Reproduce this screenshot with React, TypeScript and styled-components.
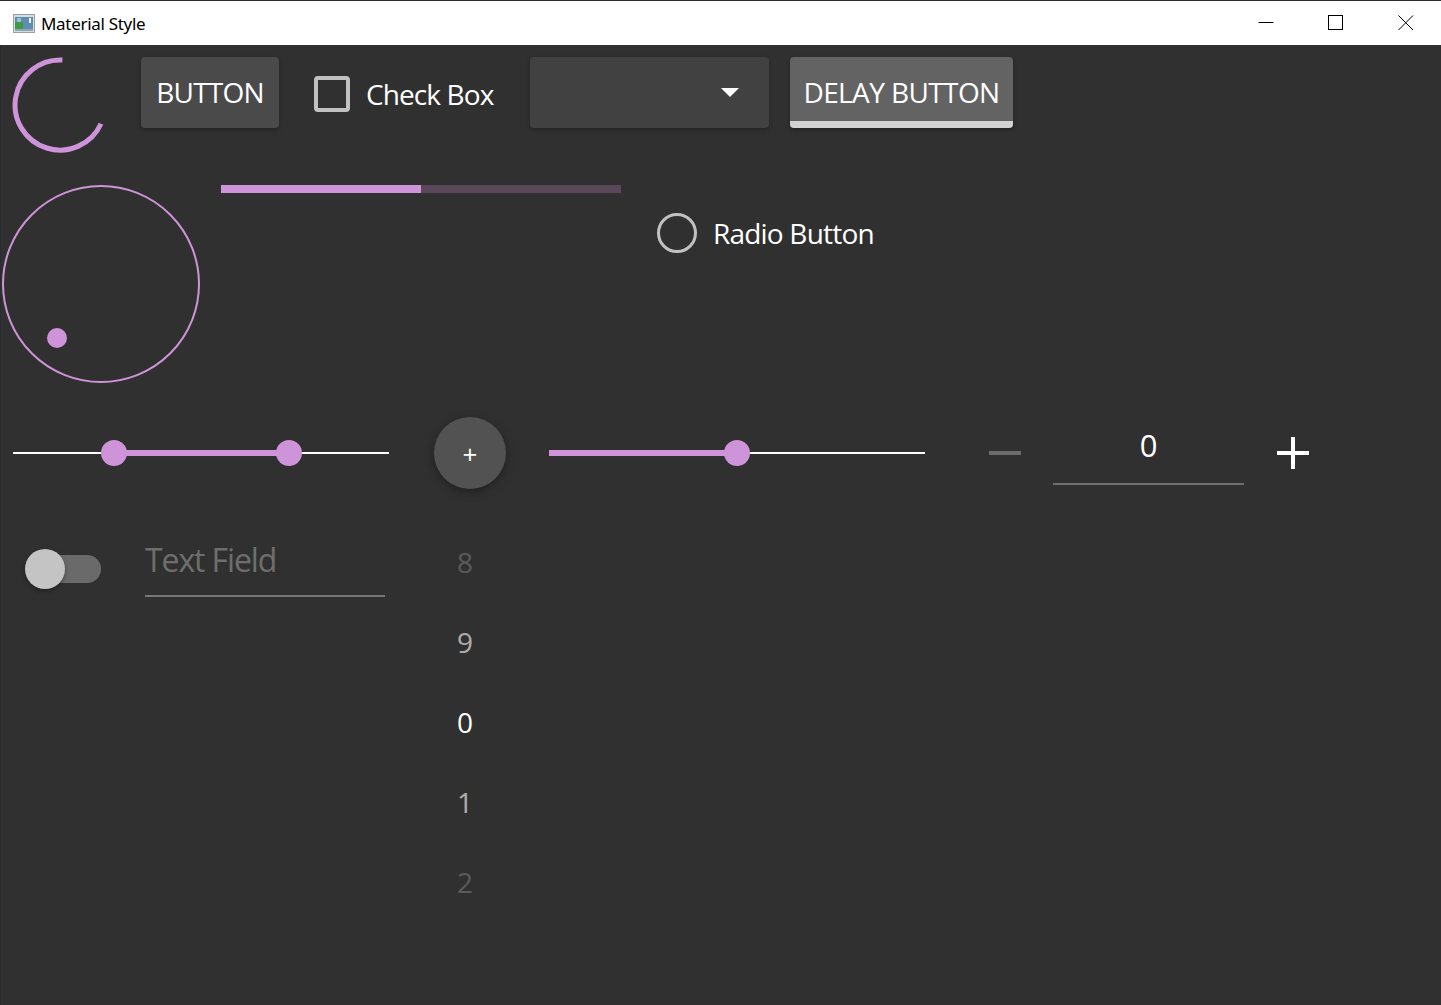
import styled, { createGlobalStyle } from "styled-components";

const accent = "#ce93d8";

const GlobalStyle = createGlobalStyle`
  html, body {
    margin: 0;
    padding: 0;
    background: #303030;
  }
  body {
    font-family: "Open Sans", "Noto Sans", sans-serif;
    color: #fff;
  }
`;

const Window = styled.div`
  width: 1441px;
  height: 1005px;
  display: flex;
  flex-direction: column;
  overflow: hidden;
`;

const TitleBar = styled.header`
  height: 44px;
  border-top: 1px solid #2b2b2b;
  background: #fff;
  display: flex;
  align-items: center;
  color: #000;
  font-family: "Noto Sans", "Open Sans", sans-serif;
  font-size: 17px;
  letter-spacing: -0.3px;
`;

const AppIcon = styled.svg`
  margin-left: 13px;
  flex: none;
`;

const Title = styled.span`
  margin-left: 6px;
`;

const Captions = styled.div`
  margin-left: auto;
  display: flex;
  height: 100%;
`;

const CaptionButton = styled.div`
  width: 70px;
  height: 100%;
  display: flex;
  align-items: center;
  justify-content: center;
`;

const Content = styled.main`
  flex: 1;
  background: #303030;
  border-left: 1px solid #2a2c33;
  display: flex;
  flex-direction: column;
`;

const Row = styled.div<{ $height: number; $top?: number; $align?: string }>`
  display: flex;
  align-items: ${(p) => p.$align ?? "flex-start"};
  height: ${(p) => p.$height}px;
  padding-top: ${(p) => p.$top ?? 0}px;
  flex: none;
`;

const BusyIcon = styled.svg`
  margin-left: 11px;
  flex: none;
`;

const Button = styled.div<{ $ml: number; $width: number }>`
  margin-left: ${(p) => p.$ml}px;
  width: ${(p) => p.$width}px;
  height: 71px;
  flex: none;
  background: #4a4a4a;
  border-radius: 4px;
  box-shadow: 0 2px 4px rgba(0, 0, 0, 0.28);
  display: flex;
  align-items: center;
  justify-content: center;
  font-size: 28px;
  white-space: nowrap;
  letter-spacing: -0.8px;
  padding-bottom: 2px;
  box-sizing: border-box;
`;

const DelayButton = styled(Button)`
  position: relative;
  overflow: hidden;
  background: #636363;
  letter-spacing: -0.6px;
  &::after {
    content: "";
    position: absolute;
    left: 0;
    right: 0;
    bottom: 0;
    height: 7px;
    background: #d2d2d2;
  }
`;

const CheckItem = styled.label`
  margin-left: 35px;
  width: 180px;
  height: 74px;
  flex: none;
  display: flex;
  align-items: center;
  font-size: 28px;
  letter-spacing: -0.9px;
  white-space: nowrap;
`;

const CheckBox = styled.span`
  width: 36px;
  height: 36px;
  box-sizing: border-box;
  border: 4px solid #c1c1c1;
  border-radius: 4px;
  flex: none;
  margin-right: 16px;
`;

const Combo = styled.div`
  margin-left: 36px;
  width: 239px;
  height: 71px;
  flex: none;
  background: #414141;
  border-radius: 4px;
  box-shadow: 0 2px 4px rgba(0, 0, 0, 0.25);
  display: flex;
  align-items: center;
  justify-content: flex-end;
  padding-right: 30px;
  box-sizing: border-box;
`;

const ComboArrow = styled.span`
  width: 0;
  height: 0;
  border-left: 9.5px solid transparent;
  border-right: 9.5px solid transparent;
  border-top: 9px solid #fff;
`;

const Dial = styled.div`
  position: relative;
  margin-left: 1px;
  width: 198px;
  height: 198px;
  box-sizing: border-box;
  border: 2px solid ${accent};
  border-radius: 50%;
  flex: none;
`;

const DialHandle = styled.span`
  position: absolute;
  left: 43px;
  top: 141px;
  width: 20px;
  height: 20px;
  border-radius: 50%;
  background: ${accent};
`;

const Progress = styled.div`
  margin-left: 21px;
  width: 400px;
  height: 8px;
  background: #58485a;
  flex: none;
  display: flex;
`;

const ProgressFill = styled.div`
  height: 100%;
  background: ${accent};
`;

const RadioItem = styled.label`
  margin-left: 36px;
  margin-top: 28px;
  height: 40px;
  display: flex;
  align-items: center;
  font-size: 28px;
  letter-spacing: -0.8px;
  white-space: nowrap;
`;

const RadioRing = styled.span`
  width: 40px;
  height: 40px;
  box-sizing: border-box;
  border: 3px solid #c1c1c1;
  border-radius: 50%;
  margin-right: 16px;
  flex: none;
`;

const SliderBox = styled.div<{ $ml: number }>`
  position: relative;
  margin-left: ${(p) => p.$ml}px;
  width: 376px;
  height: 26px;
  flex: none;
`;

const SliderTrack = styled.div`
  position: absolute;
  left: 0;
  right: 0;
  top: 12px;
  height: 2px;
  background: #fff;
`;

const SliderFill = styled.div`
  position: absolute;
  top: 10px;
  height: 6px;
  background: ${accent};
`;

const SliderHandle = styled.div`
  position: absolute;
  top: 0;
  width: 26px;
  height: 26px;
  margin-left: -13px;
  border-radius: 50%;
  background: ${accent};
`;

const RoundButton = styled.div`
  margin-left: 45px;
  width: 72px;
  height: 72px;
  flex: none;
  border-radius: 50%;
  background: #525252;
  box-shadow: 0 3px 10px rgba(0, 0, 0, 0.35);
  display: flex;
  align-items: center;
  justify-content: center;
  font-size: 26px;
  padding-top: 2px;
  box-sizing: border-box;
`;

const SpinSign = styled.div<{ $ml: number; $color: string; $plus?: boolean }>`
  position: relative;
  margin-left: ${(p) => p.$ml}px;
  width: 32px;
  height: 32px;
  flex: none;
  &::before {
    content: "";
    position: absolute;
    left: 0;
    right: 0;
    top: 14px;
    height: 4px;
    background: ${(p) => p.$color};
  }
  &::after {
    content: "";
    display: ${(p) => (p.$plus ? "block" : "none")};
    position: absolute;
    top: 0;
    bottom: 0;
    left: 14px;
    width: 4px;
    background: ${(p) => p.$color};
  }
`;

const SpinValue = styled.div`
  margin-left: 32px;
  width: 191px;
  height: 68px;
  align-self: flex-start;
  box-sizing: border-box;
  border-bottom: 2px solid #6e6e6e;
  padding-bottom: 10px;
  display: flex;
  align-items: center;
  justify-content: center;
  font-size: 31px;
  flex: none;
`;

const Switch = styled.div`
  position: relative;
  margin-left: 24px;
  margin-top: 27px;
  width: 76px;
  height: 40px;
  flex: none;
`;

const SwitchTrack = styled.span`
  position: absolute;
  left: 4px;
  top: 6px;
  width: 72px;
  height: 28px;
  border-radius: 14px;
  background: #6a6a6a;
`;

const SwitchKnob = styled.span`
  position: absolute;
  left: 0;
  top: 0;
  width: 40px;
  height: 40px;
  border-radius: 50%;
  background: #c4c4c4;
  box-shadow: 0 2px 4px rgba(0, 0, 0, 0.35);
`;

const TextField = styled.div`
  margin-left: 44px;
  width: 240px;
  padding-top: 18px;
  padding-bottom: 15px;
  border-bottom: 2px solid #777;
  line-height: 40px;
  font-size: 32px;
  letter-spacing: -1.1px;
  color: #6e6e6e;
  flex: none;
`;

const Tumbler = styled.div`
  margin-left: 50px;
  width: 60px;
  display: flex;
  flex-direction: column;
  flex: none;
`;

const TumblerItem = styled.div<{ $opacity: number }>`
  height: 80px;
  display: flex;
  align-items: center;
  justify-content: center;
  font-size: 28px;
  opacity: ${(p) => p.$opacity};
`;

const range = { first: 0.25, second: 0.75 };
const sliderValue = 0.5;
const travel = (v: number) => 13 + v * 350;

const tumblerItems: [string, number][] = [
  ["8", 0.2],
  ["9", 0.6],
  ["0", 1],
  ["1", 0.6],
  ["2", 0.2],
];

export default function App() {
  return (
    <>
      <GlobalStyle />
      <Window>
        <TitleBar>
          <AppIcon width="22" height="19" viewBox="0 0 22 19">
            <rect x="0.5" y="0.5" width="21" height="18" fill="#d9dcdf" stroke="#9aa0a6" />
            <rect x="2" y="3" width="18" height="14" fill="#5d8fb0" />
            <rect x="2" y="8" width="8" height="9" fill="#3f9a4a" />
            <rect x="4" y="4" width="4" height="4" fill="#9bc0d6" />
            <rect x="16" y="4" width="2" height="5" fill="#f2f2f2" />
            <rect x="2" y="15" width="18" height="2" fill="#8fa6b5" />
          </AppIcon>
          <Title>Material Style</Title>
          <Captions>
            <CaptionButton>
              <svg width="16" height="16" viewBox="0 0 16 16">
                <path d="M0.5 7.5 H15.5" stroke="#000" strokeWidth="1" />
              </svg>
            </CaptionButton>
            <CaptionButton>
              <svg width="16" height="16" viewBox="0 0 16 16">
                <rect x="0.5" y="0.5" width="14" height="14" fill="none" stroke="#000" />
              </svg>
            </CaptionButton>
            <CaptionButton>
              <svg width="16" height="16" viewBox="0 0 16 16">
                <path d="M0.5 0.5 L15 15 M15 0.5 L0.5 15" stroke="#000" strokeWidth="1" />
              </svg>
            </CaptionButton>
          </Captions>
        </TitleBar>

        <Content>
          <Row $height={128} $top={12}>
            <BusyIcon width="96" height="96" viewBox="0 0 96 96">
              <path
                d="M50.4 3.1 A45 45 0 1 0 89 66.7"
                fill="none"
                stroke={accent}
                strokeWidth="5"
              />
            </BusyIcon>
            <Button $ml={33} $width={138}>
              BUTTON
            </Button>
            <CheckItem>
              <CheckBox />
              Check Box
            </CheckItem>
            <Combo>
              <ComboArrow />
            </Combo>
            <DelayButton $ml={21} $width={223}>
              DELAY BUTTON
            </DelayButton>
          </Row>

          <Row $height={232}>
            <Dial>
              <DialHandle />
            </Dial>
            <Progress>
              <ProgressFill style={{ width: "50%" }} />
            </Progress>
            <RadioItem>
              <RadioRing />
              Radio Button
            </RadioItem>
          </Row>

          <Row $height={72} $align="center">
            <SliderBox $ml={12}>
              <SliderTrack />
              <SliderFill
                style={{
                  left: travel(range.first),
                  width: travel(range.second) - travel(range.first),
                }}
              />
              <SliderHandle style={{ left: travel(range.first) }} />
              <SliderHandle style={{ left: travel(range.second) }} />
            </SliderBox>
            <RoundButton>+</RoundButton>
            <SliderBox $ml={43}>
              <SliderTrack />
              <SliderFill style={{ left: 0, width: travel(sliderValue) }} />
              <SliderHandle style={{ left: travel(sliderValue) }} />
            </SliderBox>
            <SpinSign $ml={64} $color="#6c6c6c" />
            <SpinValue>0</SpinValue>
            <SpinSign $ml={33} $color="#fff" $plus />
          </Row>

          <Row $height={420} $top={33}>
            <Switch>
              <SwitchTrack />
              <SwitchKnob />
            </Switch>
            <TextField>Text Field</TextField>
            <Tumbler>
              {tumblerItems.map(([label, opacity]) => (
                <TumblerItem key={label} $opacity={opacity}>
                  {label}
                </TumblerItem>
              ))}
            </Tumbler>
          </Row>
        </Content>
      </Window>
    </>
  );
}
